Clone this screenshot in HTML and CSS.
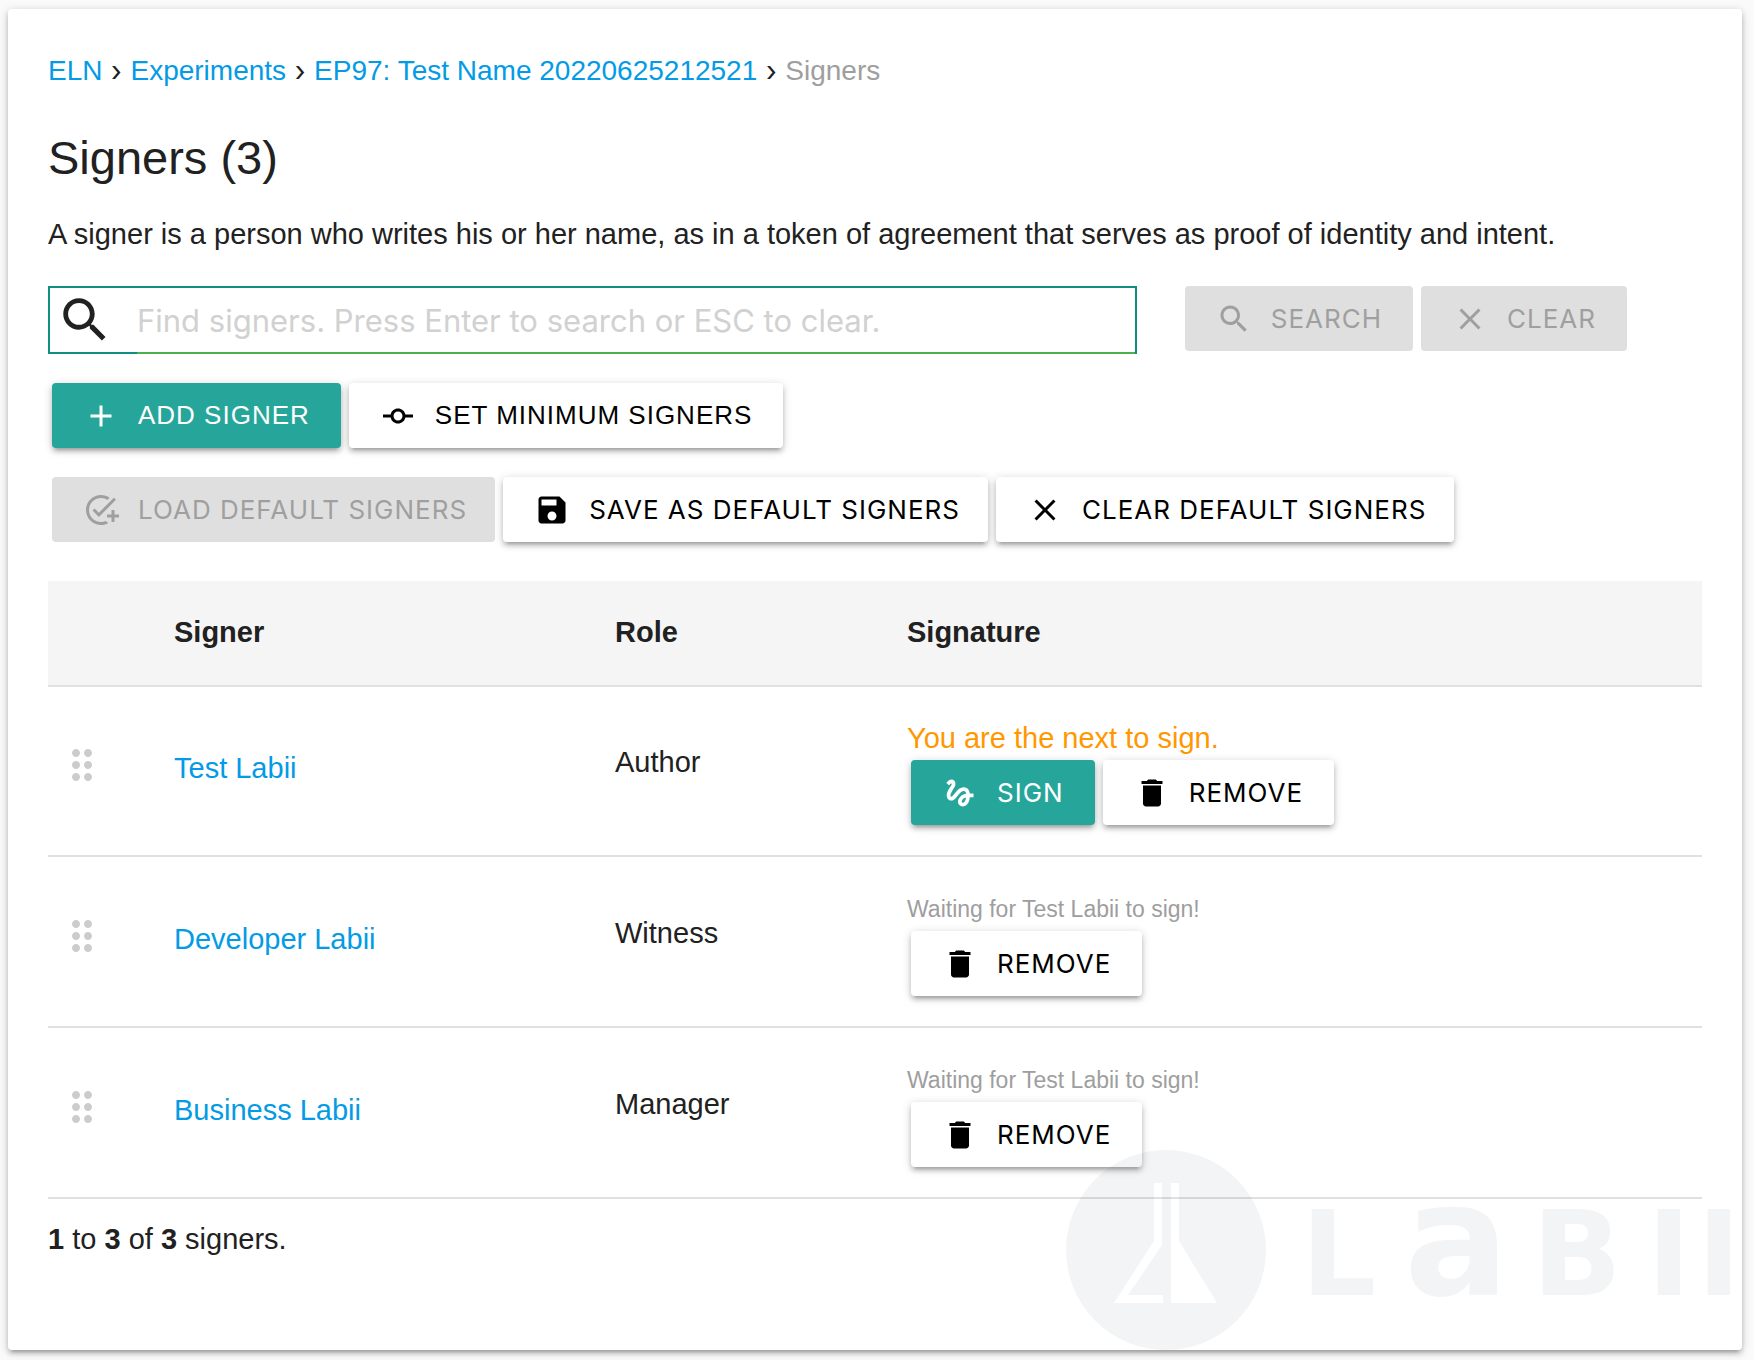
FILE: index.html
```html
<!DOCTYPE html>
<html lang="en">
<head>
<meta charset="utf-8">
<meta name="viewport" content="width=device-width, initial-scale=1">
<title>Signers</title>
<link rel="stylesheet" href="styles.css">
</head>
<body>
<svg class="sprite" aria-hidden="true">
  <symbol id="i-search" viewBox="0 0 24 24"><path d="M15.5 14h-.79l-.28-.27C15.41 12.59 16 11.11 16 9.5 16 5.91 13.09 3 9.5 3S3 5.91 3 9.5 5.91 16 9.5 16c1.61 0 3.09-.59 4.23-1.57l.27.28v.79l5 4.99L20.49 19l-4.99-5zm-6 0C7.01 14 5 11.99 5 9.5S7.01 5 9.5 5 14 7.01 14 9.5 11.99 14 9.5 14z"/></symbol>
  <symbol id="i-close" viewBox="0 0 24 24"><path d="M19 6.41L17.59 5 12 10.59 6.41 5 5 6.41 10.59 12 5 17.59 6.41 19 12 13.41 17.59 19 19 17.59 13.41 12z"/></symbol>
  <symbol id="i-add" viewBox="0 0 24 24"><path d="M19 13h-6v6h-2v-6H5v-2h6V5h2v6h6v2z"/></symbol>
  <symbol id="i-commit" viewBox="0 0 24 24"><path d="M16.9 11c-.46-2.28-2.48-4-4.9-4s-4.44 1.72-4.9 4H2v2h5.1c.46 2.28 2.48 4 4.9 4s4.44-1.72 4.9-4H22v-2h-5.1zM12 15c-1.66 0-3-1.34-3-3s1.34-3 3-3 3 1.34 3 3-1.34 3-3 3z"/></symbol>
  <symbol id="i-task" viewBox="0 0 24 24"><path d="M22 5.18L10.59 16.6l-4.24-4.24 1.41-1.41 2.83 2.83 10-10L22 5.18zM12 20c-4.41 0-8-3.59-8-8s3.59-8 8-8c1.57 0 3.04.46 4.28 1.25l1.45-1.45C16.1 2.67 14.13 2 12 2 6.48 2 2 6.48 2 12s4.48 10 10 10c1.73 0 3.36-.44 4.78-1.22l-1.5-1.5c-1 .46-2.11.72-3.28.72zM19 15h-3v2h3v3h2v-3h3v-2h-3v-3h-2v3z"/></symbol>
  <symbol id="i-save" viewBox="0 0 24 24"><path d="M17 3H5c-1.11 0-2 .9-2 2v14c0 1.1.89 2 2 2h14c1.1 0 2-.9 2-2V7l-4-4zm-5 16c-1.66 0-3-1.34-3-3s1.34-3 3-3 3 1.34 3 3-1.34 3-3 3zm3-10H5V5h10v4z"/></symbol>
  <symbol id="i-delete" viewBox="0 0 24 24"><path d="M6 19c0 1.1.9 2 2 2h8c1.1 0 2-.9 2-2V7H6v12zM19 4h-3.5l-1-1h-5l-1 1H5v2h14V4z"/></symbol>
  <symbol id="i-gesture" viewBox="0 0 24 24"><path d="M4.59 6.89c.7-.71 1.4-1.35 1.71-1.22.5.2 0 1.03-.3 1.52-.25.42-2.86 3.89-2.86 6.31 0 1.28.48 2.34 1.34 2.98.75.56 1.74.73 2.64.46 1.07-.31 1.95-1.4 3.06-2.77 1.21-1.49 2.83-3.44 4.08-3.44 1.63 0 1.65 1.01 1.76 1.79-3.78.64-5.38 3.67-5.38 5.37 0 1.7 1.44 3.09 3.21 3.09 1.63 0 4.29-1.33 4.69-6.1H21v-2.5h-2.47c-.15-1.65-1.09-4.2-4.03-4.2-2.25 0-4.18 1.91-4.94 2.84-.58.73-2.06 2.48-2.29 2.72-.25.3-.68.84-1.11.84-.45 0-.72-.83-.36-1.92.35-1.09 1.4-2.86 1.85-3.52.78-1.14 1.3-1.92 1.3-3.28C8.95 3.69 7.31 3 6.44 3 5.12 3 3.97 4 3.72 4.25c-.36.36-.66.66-.88.93l1.75 1.71zm9.29 11.66c-.31 0-.74-.26-.74-.72 0-.6.73-2.2 2.87-2.76-.3 2.69-1.43 3.48-2.13 3.48z"/></symbol>
  <symbol id="i-drag" viewBox="0 0 24 24"><path d="M11 18c0 1.1-.9 2-2 2s-2-.9-2-2 .9-2 2-2 2 .9 2 2zm-2-8c-1.1 0-2 .9-2 2s.9 2 2 2 2-.9 2-2-.9-2-2-2zm0-6c-1.1 0-2 .9-2 2s.9 2 2 2 2-.9 2-2-.9-2-2-2zm6 4c1.1 0 2-.9 2-2s-.9-2-2-2-2 .9-2 2 .9 2 2 2zm0 2c-1.1 0-2 .9-2 2s.9 2 2 2 2-.9 2-2-.9-2-2-2zm0 6c-1.1 0-2 .9-2 2s.9 2 2 2 2-.9 2-2-.9-2-2-2z"/></symbol>
</svg>

<main class="card">
  <nav class="breadcrumb" aria-label="Breadcrumb">
    <a href="#">ELN</a><span class="sep">›</span><a href="#">Experiments</a><span class="sep">›</span><a href="#">EP97: Test Name 20220625212521</a><span class="sep">›</span><span class="current">Signers</span>
  </nav>

  <h1 class="title">Signers (3)</h1>
  <p class="intro">A signer is a person who writes his or her name, as in a token of agreement that serves as proof of identity and intent.</p>

  <form class="search-row">
    <div class="search-box">
      <label class="search-label" for="find" aria-label="Find signers"><svg class="search-icon"><use href="#i-search"/></svg></label>
      <input class="search-input" id="find" type="text" placeholder="Find signers. Press Enter to search or ESC to clear.">
    </div>
    <div class="btn-group">
      <button class="btn" type="button" disabled><svg class="icon"><use href="#i-search"/></svg>SEARCH</button>
      <button class="btn" type="button" disabled><svg class="icon"><use href="#i-close"/></svg>CLEAR</button>
    </div>
  </form>

  <div class="btn-group actions manage">
    <button class="btn btn-primary" type="button"><svg class="icon"><use href="#i-add"/></svg>ADD SIGNER</button>
    <button class="btn" type="button"><svg class="icon"><use href="#i-commit"/></svg>SET MINIMUM SIGNERS</button>
  </div>
  <div class="btn-group actions defaults">
    <button class="btn" type="button" disabled><svg class="icon"><use href="#i-task"/></svg>LOAD DEFAULT SIGNERS</button>
    <button class="btn" type="button"><svg class="icon"><use href="#i-save"/></svg>SAVE AS DEFAULT SIGNERS</button>
    <button class="btn" type="button"><svg class="icon"><use href="#i-close"/></svg>CLEAR DEFAULT SIGNERS</button>
  </div>

  <table class="signers">
    <colgroup><col class="col-drag"><col class="col-signer"><col class="col-role"><col></colgroup>
    <thead>
      <tr><th></th><th>Signer</th><th>Role</th><th>Signature</th></tr>
    </thead>
    <tbody>
      <tr>
        <td class="drag"><svg class="drag-icon"><use href="#i-drag"/></svg></td>
        <td class="name"><a href="#">Test Labii</a></td>
        <td class="role">Author</td>
        <td>
          <div class="status next">You are the next to sign.</div>
          <div class="btn-group sign-actions">
            <button class="btn btn-primary" type="button"><svg class="icon"><use href="#i-gesture"/></svg>SIGN</button>
            <button class="btn" type="button"><svg class="icon"><use href="#i-delete"/></svg>REMOVE</button>
          </div>
        </td>
      </tr>
      <tr>
        <td class="drag"><svg class="drag-icon"><use href="#i-drag"/></svg></td>
        <td class="name"><a href="#">Developer Labii</a></td>
        <td class="role">Witness</td>
        <td>
          <div class="status waiting">Waiting for Test Labii to sign!</div>
          <div class="btn-group sign-actions">
            <button class="btn" type="button"><svg class="icon"><use href="#i-delete"/></svg>REMOVE</button>
          </div>
        </td>
      </tr>
      <tr>
        <td class="drag"><svg class="drag-icon"><use href="#i-drag"/></svg></td>
        <td class="name"><a href="#">Business Labii</a></td>
        <td class="role">Manager</td>
        <td>
          <div class="status waiting">Waiting for Test Labii to sign!</div>
          <div class="btn-group sign-actions">
            <button class="btn" type="button"><svg class="icon"><use href="#i-delete"/></svg>REMOVE</button>
          </div>
        </td>
      </tr>
    </tbody>
  </table>

  <p class="count"><b>1</b> to <b>3</b> of <b>3</b> signers.</p>

  <svg class="watermark" viewBox="0 0 676 200" role="img" aria-label="Labii">
    <path fill-rule="evenodd" d="M100 0a100 100 0 1 0 0 200a100 100 0 1 0 0-200zM88 33h8v62L62 145h35v8H48L88 91zM105 33h8v58l38 62h-46z"/>
    <text class="wordmark" y="145"><tspan x="235">L</tspan><tspan class="wordmark-a" x="338">a</tspan><tspan x="466">B</tspan><tspan x="581">I</tspan><tspan x="631">I</tspan></text>
  </svg>
</main>
</body>
</html>
```

FILE: styles.css
```css
* {
  box-sizing: border-box;
}

body {
  margin: 0;
  padding: 9px 12px 10px 8px;
  background: #fafafa;
  color: #212121;
  font: 29px/42px "Liberation Sans", Arial, sans-serif;
}

a {
  color: #039be5;
  text-decoration: none;
}

.sprite {
  display: none;
}

.card {
  position: relative;
  padding: 41px 40px 90px;
  background: #fff;
  border-radius: 4px;
  box-shadow: 0 4px 4px rgba(0, 0, 0, .14), 0 6px 2px -4px rgba(0, 0, 0, .12), 0 2px 10px rgba(0, 0, 0, .2);
}

.breadcrumb {
  display: flex;
  flex-wrap: wrap;
  font-size: 28px;
}

.sep {
  width: 28px;
  font-family: Inter, sans-serif;
  text-align: center;
}

.current {
  color: #9e9e9e;
}

.title {
  margin: 38px 0 27px;
  font-size: 47px;
  line-height: 56px;
  font-weight: 400;
}

.intro {
  margin: 0;
}

.search-row {
  display: flex;
  align-items: flex-start;
  gap: 48px;
  margin-top: 31px;
  padding-right: 75px;
}

.search-box {
  display: flex;
  flex: 1;
  height: 68px;
  border: 2px solid #0f8f82;
  border-bottom: 0;
}

.search-label {
  display: flex;
  align-items: center;
  width: 87px;
  padding-left: 6px;
  border-bottom: 2px solid #0f8f82;
}

.search-icon {
  width: 58px;
  height: 58px;
  fill: #212121;
}

.search-input {
  flex: 1;
  min-width: 0;
  padding: 0;
  border: 0;
  border-bottom: 2px solid #4caf50;
  outline: 0;
  background: none;
  font: 31px Inter, sans-serif;
}

.search-input::placeholder {
  color: #d1d1d1;
  opacity: 1;
}

.btn-group {
  display: flex;
  flex-wrap: wrap;
  gap: 8px;
}

.search-row .btn-group {
  flex: none;
}

.actions {
  margin: 29px 4px 0;
}

.btn {
  display: flex;
  align-items: center;
  gap: 19px;
  height: 65px;
  padding: 0 31px;
  border: 0;
  border-radius: 4px;
  background: #fff;
  color: #000;
  font: 26px Inter, sans-serif;
  letter-spacing: 1px;
  white-space: nowrap;
  box-shadow: 0 4px 4px rgba(0, 0, 0, .14), 0 6px 2px -4px rgba(0, 0, 0, .12), 0 2px 10px rgba(0, 0, 0, .2);
}

.manage .btn {
  font-family: "Liberation Sans", Arial, sans-serif;
}

.defaults .btn {
  padding-right: 28px;
}

.btn-primary {
  background: #26a69a;
  color: #fff;
}

.btn:disabled {
  background: #dfdfdf;
  color: #9f9f9f;
  box-shadow: none;
}

.icon {
  width: 36px;
  height: 36px;
  fill: currentColor;
}

.signers {
  width: 100%;
  margin-top: 39px;
  border-collapse: collapse;
  table-layout: fixed;
}

.col-drag {
  width: 116px;
}

.col-signer {
  width: 441px;
}

.col-role {
  width: 292px;
}

.signers tr {
  border-bottom: 2px solid #e0e0e0;
}

.signers th {
  padding: 30px 10px 32px;
  background: #f5f5f5;
  text-align: left;
}

.signers td {
  padding: 30px 10px;
}

.signers .drag {
  padding-bottom: 42px;
}

.signers .name {
  padding-bottom: 36px;
}

.signers .role {
  padding-bottom: 48px;
}

.drag-icon {
  display: block;
  width: 48px;
  height: 48px;
  fill: #ccc;
}

.status {
  line-height: 43px;
}

.next {
  color: #ff9800;
}

.waiting {
  color: #9e9e9e;
  font-size: 23px;
  line-height: 44px;
}

.sign-actions {
  margin-left: 4px;
}

.count {
  margin: 19px 0 0;
}

.watermark {
  position: absolute;
  right: 0;
  bottom: 0;
  width: 676px;
  height: 200px;
  fill: rgba(20, 30, 70, .05);
  pointer-events: none;
}

.wordmark {
  font: 700 118px "DejaVu Sans", sans-serif;
}

.wordmark-a {
  font-size: 156px;
}
```
